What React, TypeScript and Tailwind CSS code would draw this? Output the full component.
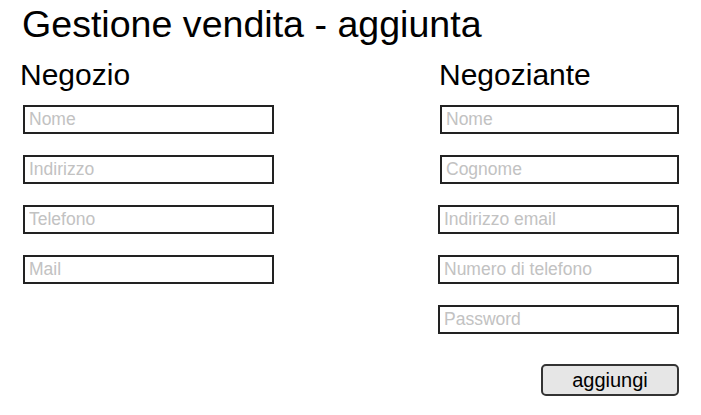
export default function App() {
  const left = ["Nome", "Indirizzo", "Telefono", "Mail"];
  const right = ["Indirizzo email", "Numero di telefono", "Password"];

  return (
    <div className="w-[701px] h-[415px] bg-white text-black font-['Liberation_Sans',Arial,sans-serif]">
      {/* Title */}
      <h1 className="pl-[22px] pt-[6px] text-[37.6px] leading-[37px]">
        Gestione vendita - aggiunta
      </h1>

      <div className="flex mt-[17px]">
        {/* Negozio */}
        <div className="ml-[20px] w-[418px]">
          <h2 className="text-[30px] leading-none">Negozio</h2>
          <div className="mt-[15px] ml-[3px] flex flex-col gap-[21px]">
            {left.map((p) => (
              <input
                key={p}
                placeholder={p}
                className="box-border w-[251px] h-[29px] border-2 border-[#222] bg-white pl-[4px] text-[17.5px] outline-none placeholder:text-[#c2c2c2]"
              />
            ))}
          </div>
        </div>

        {/* Negoziante */}
        <div className="w-[241px]">
          <h2 className="ml-[1px] text-[30px] leading-none">Negoziante</h2>
          <div className="mt-[15px] flex flex-col gap-[21px]">
            {["Nome", "Cognome"].map((p) => (
              <input
                key={p}
                placeholder={p}
                className="box-border ml-[2px] w-[239px] h-[29px] border-2 border-[#222] bg-white pl-[4px] text-[17.5px] outline-none placeholder:text-[#c2c2c2]"
              />
            ))}
            {right.map((p) => (
              <input
                key={p}
                placeholder={p}
                className="box-border w-[241px] h-[29px] border-2 border-[#222] bg-white pl-[4px] text-[17.5px] outline-none placeholder:text-[#c2c2c2]"
              />
            ))}
          </div>
          <div className="flex justify-end mt-[30px]">
            <button className="box-border w-[138px] h-[32px] rounded-[5px] border-2 border-[#333] bg-[#e6e6e6] text-[20px] leading-none text-black">
              aggiungi
            </button>
          </div>
        </div>
      </div>
    </div>
  );
}
